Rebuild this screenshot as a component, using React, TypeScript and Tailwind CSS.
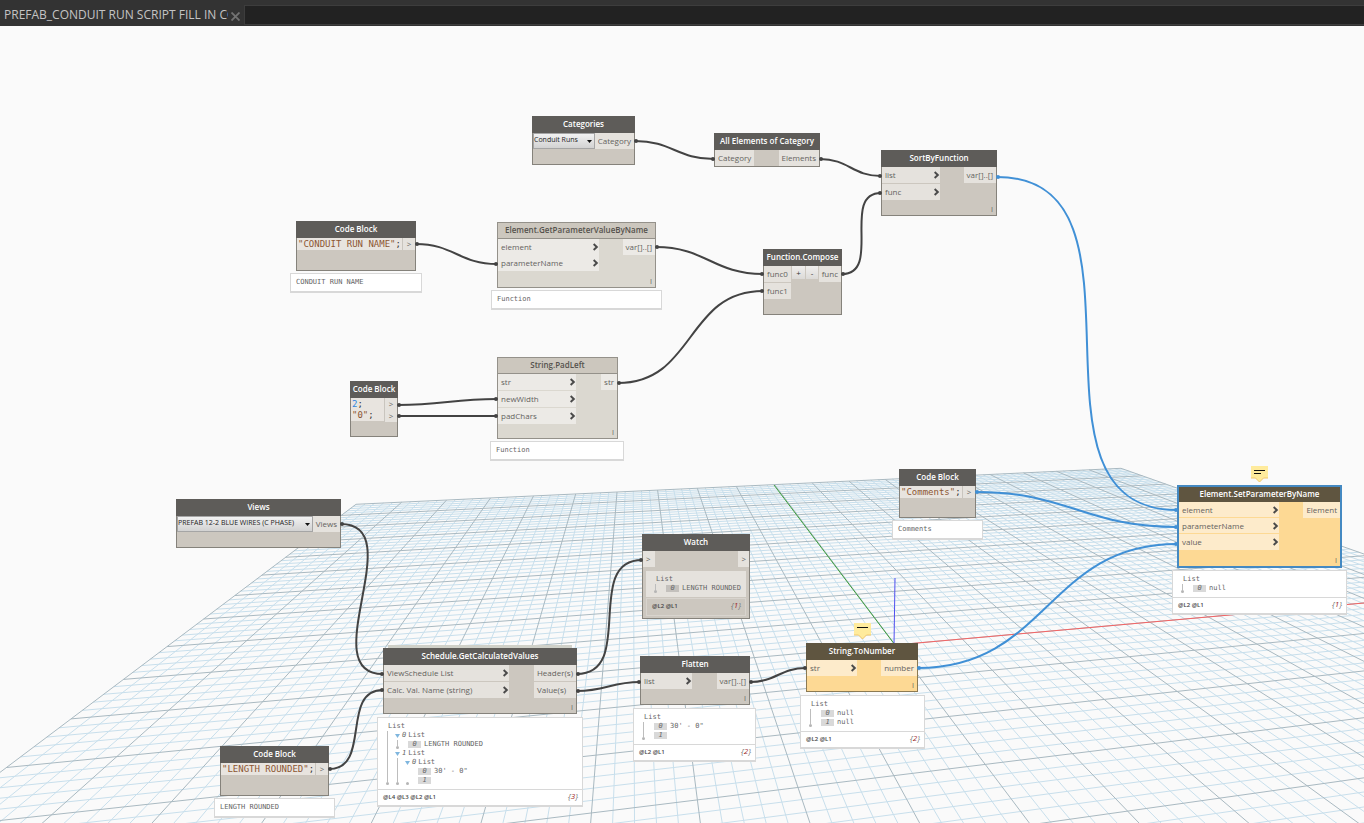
import { useId, type ReactNode } from 'react';

type Tone = 'dark' | 'light' | 'warn';

const TONES: Record<Tone, { frame: string; header: string; port: string }> = {
  dark: { frame: 'border-[#85827b] bg-[#ccc7bf]', header: 'bg-[#5e5c59] border-[#5e5c59] text-white', port: 'bg-[#e5e2dd]' },
  light: { frame: 'border-[#94918a] bg-[#dbd8d0]', header: 'bg-[#ccc7be] border-[#94918a] text-[#55524d]', port: 'bg-[#eceae6]' },
  warn: { frame: 'border-[#8c7a52] bg-[#fdd994]', header: 'bg-[#5f5540] border-[#5f5540] text-white', port: 'bg-[#fdebcb]' },
};

/* ---------- background grid ---------- */

// ground plane -> screen, s in 0..1 across, v in -1..1 towards the horizon
function project(s: number, v: number) {
  const w = 1 + 0.4235 * s + 1.0302 * v;
  const x = (2027.8 * s + 651.75 * v + 71) / w;
  const y = (125.2 * s + 304.9 * v + 718.9) / w - 26;
  return `${x.toFixed(1)} ${y.toFixed(1)}`;
}

const CELLS = 100;
const NEAR = -0.74;

function gridPath(major: boolean) {
  let d = '';
  for (let i = 0; i <= CELLS; i++) {
    if ((i % 5 === 0) !== major) continue;
    const s = i / CELLS;
    const v = -1 + s * 2;
    d += `M${project(s, NEAR)}L${project(s, 1)}`;
    if (v >= NEAR) d += `M${project(0, v)}L${project(1, v)}`;
  }
  return d;
}

const MINOR = gridPath(false);
const MAJOR = gridPath(true);

function Grid() {
  return (
    <svg className="absolute inset-0 h-full w-full" aria-hidden="true">
      <path d={MINOR} stroke="#c8dfec" fill="none" />
      <path d={MAJOR} stroke="#a9b9c1" fill="none" />
      <path d="M774 459L895 619" stroke="#3c9e3c" />
      <path d="M895 619L1364 577" stroke="#f56464" />
      <path d="M895 552L894 619" stroke="#5050f0" />
    </svg>
  );
}

/* ---------- wires ---------- */

const WIRES = [
  [635, 115, 714, 133],
  [820, 133, 881, 150],
  [416, 218, 497, 238],
  [656, 221, 763, 248],
  [618, 357, 763, 265],
  [842, 248, 881, 167],
  [398, 379, 497, 373],
  [398, 390, 497, 390],
  [341, 498, 383, 648],
  [329, 743, 383, 664],
  [577, 648, 642, 534],
  [577, 665, 640, 656],
  [750, 656, 806, 642],
];

const ACTIVE_WIRES = [
  [997, 151, 1177, 484],
  [976, 466, 1177, 501],
  [918, 642, 1177, 518],
];

function Wire({ points, color }: { points: number[]; color: string }) {
  const [x1, y1, x2, y2] = points;
  const bend = 0.45 * Math.hypot(x2 - x1, y2 - y1);
  return (
    <g>
      <path d={`M${x1} ${y1}C${x1 + bend} ${y1} ${x2 - bend} ${y2} ${x2} ${y2}`} fill="none" stroke={color} strokeWidth="2" />
      <circle cx={x1 + 1} cy={y1} r="2" fill={color} />
      <circle cx={x2 - 1} cy={y2} r="2" fill={color} />
    </g>
  );
}

function Wires() {
  return (
    <svg className="pointer-events-none absolute inset-0 h-full w-full" aria-hidden="true">
      {WIRES.map((w, i) => (
        <Wire key={i} points={w} color="#434343" />
      ))}
      {ACTIVE_WIRES.map((w, i) => (
        <Wire key={i} points={w} color="#4090d6" />
      ))}
    </svg>
  );
}

/* ---------- node pieces ---------- */

function Chevron() {
  return (
    <svg viewBox="0 0 6 8" className="h-2 w-[6px]" aria-hidden="true">
      <path d="M0.6 1L3.8 4L0.6 7" fill="none" stroke="#4a4a4a" strokeWidth="2" />
    </svg>
  );
}

function InPort({ tone = 'dark', children, chevron = true }: { tone?: Tone; children: ReactNode; chevron?: boolean }) {
  return (
    <div className={`flex h-4 items-center justify-between pl-[3px] ${TONES[tone].port}`}>
      <span>{children}</span>
      {chevron && <Chevron />}
    </div>
  );
}

function OutPort({ tone = 'dark', children }: { tone?: Tone; children: ReactNode }) {
  return <div className={`flex h-4 items-center px-[3px] ${TONES[tone].port}`}>{children}</div>;
}

function Node({ title, tone = 'dark', lacing = false, selected = false, className, children }: {
  title: string;
  tone?: Tone;
  lacing?: boolean;
  selected?: boolean;
  className: string;
  children: ReactNode;
}) {
  const t = TONES[tone];
  const frame = selected ? 'border-2 border-[#4489c2] bg-[#fdd994]' : `border ${t.frame}`;
  const headerBox = selected ? 'h-[15px] leading-[13px]' : '-mx-px -mt-px h-[17px] border leading-[14px]';
  return (
    <section className={`absolute flex flex-col text-[8px] leading-[10px] text-[#64625e] ${frame} ${className}`}>
      <h2 className={`whitespace-nowrap text-center font-semibold ${headerBox} ${t.header}`}>{title}</h2>
      {children}
      {lacing && <span className="mt-auto pr-[3px] text-right text-[7px] leading-[10px]">I</span>}
    </section>
  );
}

function Ports({ inputs, outputs }: { inputs: ReactNode; outputs: ReactNode }) {
  return (
    <div className="flex items-start justify-between whitespace-nowrap">
      {inputs}
      {outputs}
    </div>
  );
}

function Dropdown({ label, value, className }: { label: string; value: string; className: string }) {
  const id = useId();
  return (
    <div className={`relative ${className}`}>
      <label htmlFor={id} className="sr-only">{label}</label>
      <select
        id={id}
        defaultValue={value}
        className="block h-4 w-full appearance-none border border-[#a5a5a5] bg-gradient-to-b from-[#f2f2f2] to-[#d2d2d2] pb-[3px] text-[7px] leading-[10px] text-[#222]"
      >
        <option>{value}</option>
      </select>
      <svg viewBox="0 0 5 3" className="pointer-events-none absolute bottom-[6px] right-[3px] h-[3px] w-[5px]" aria-hidden="true">
        <path d="M0 0H5L2.5 3Z" fill="#111" />
      </svg>
    </div>
  );
}

function CodeBlock({ className, lines }: { className: string; lines: ReactNode[] }) {
  return (
    <Node title="Code Block" className={className}>
      <div className="flex items-start">
        <code className="flex-1 whitespace-pre bg-[#e8e4df] pl-px pt-px font-['DejaVu_Sans_Mono','Liberation_Mono',monospace] text-[9px] leading-[11px] text-[#333]">
          {lines.map((l, i) => (
            <span key={i} className="block h-[11px]">{l}</span>
          ))}
        </code>
        <div className="flex flex-col border-l border-[#c9c5be]">
          {lines.map((_, i) => (
            <span key={i} className="flex h-3 w-3 items-center justify-center bg-[#e5e2dd]">&gt;</span>
          ))}
        </div>
      </div>
    </Node>
  );
}

function Str({ children }: { children: string }) {
  return <span className="text-[#8c5632]">{children}</span>;
}

/* ---------- preview bubbles ---------- */

type Item = { value?: string; children?: Item[]; dotOnly?: boolean };

function Tree({ items, dotOnly = false }: { items: Item[]; dotOnly?: boolean }) {
  return (
    <div className="flex">
      <div className="flex w-[3px] shrink-0 flex-col items-center">
        <div className={`w-px flex-1 ${dotOnly ? '' : 'bg-[#bdbdbd]'}`} />
        <div className="h-[3px] w-[3px] rounded-full bg-[#b5b5b5]" />
      </div>
      <div className="flex-1">
        {items.map((item, i) =>
          item.children ? (
            <div key={i} className="pl-[6px]">
              <div className="flex h-[9px] items-center gap-[2px]">
                <svg viewBox="0 0 5 4" className="h-1 w-[5px]" aria-hidden="true">
                  <path d="M0 0H5L2.5 4Z" fill="#7fb6de" />
                </svg>
                <i>{i}</i>
                <span>List</span>
              </div>
              <div className="pl-px">
                <Tree items={item.children} dotOnly={item.dotOnly} />
              </div>
            </div>
          ) : (
            <div key={i} className="flex h-[9px] items-center gap-[3px] pl-[9px]">
              <i className="h-[7px] w-[13px] bg-black/15 text-center leading-[7px]">{i}</i>
              <span className="whitespace-pre">{item.value}</span>
            </div>
          ),
        )}
      </div>
    </div>
  );
}

const MONO = "font-['DejaVu_Sans_Mono','Liberation_Mono',monospace] text-[7px] leading-[9px] text-[#666]";

function TreeList({ items }: { items: Item[] }) {
  return (
    <div className={`py-1 pl-2 ${MONO}`}>
      <div className="pl-[2px]">List</div>
      <Tree items={items} />
    </div>
  );
}

function Levels({ levels, count }: { levels: string; count: number }) {
  return (
    <div className="flex items-start justify-between pl-[5px] pr-1">
      <span className="pt-[3px] text-[6px] font-semibold leading-[8px] text-[#444]">{levels}</span>
      <i className="text-[8px] leading-[11px] text-[#777]">
        {'{'}
        <span className="text-[#a02828]">{count}</span>
        {'}'}
      </i>
    </div>
  );
}

function ValuePreview({ className, children }: { className: string; children: string }) {
  return <div className={`absolute h-5 border border-b-2 border-[#d8d8d8] bg-white pl-[5px] pt-1 ${MONO} ${className}`}>{children}</div>;
}

function ListPreview({ className, items, levels, count }: { className: string; items: Item[]; levels: string; count: number }) {
  return (
    <div className={`absolute border border-b-2 border-[#d8d8d8] bg-white ${className}`}>
      <TreeList items={items} />
      <div className="h-4 border-t border-[#d8d8d8]">
        <Levels levels={levels} count={count} />
      </div>
    </div>
  );
}

function Warning({ className, lines }: { className: string; lines: number }) {
  return (
    <svg viewBox="0 0 17 17" className={`absolute h-[17px] w-[17px] ${className}`} role="img" aria-label="Warning">
      <path d="M0 0H17V12H12.5L8.5 16L4.5 12H0Z" fill="#ffeb9c" />
      <path d="M0 12H4.5L8.5 16L12.5 12H17" fill="none" stroke="#f2c668" />
      <path d="M3 4.5H14" stroke="#111" />
      {lines > 1 && <path d="M3 7.5H10" stroke="#111" />}
    </svg>
  );
}

/* ---------- page ---------- */

function TabBar() {
  return (
    <header className="flex h-[26px] shrink-0 bg-[#333]">
      <div className="flex w-[244px] items-center pl-1 pt-1" role="tablist">
        <button role="tab" aria-selected="true" className="w-56 overflow-hidden whitespace-nowrap text-left text-[12px] leading-5 text-[#c4c4c4]">
          PREFAB_CONDUIT RUN SCRIPT FILL IN CO
        </button>
        <button aria-label="Close tab" className="ml-[3px] pt-[2px]">
          <svg viewBox="0 0 9 9" className="h-[9px] w-[9px]">
            <path d="M0.5 0.5L8.5 8.5M8.5 0.5L0.5 8.5" stroke="#737373" strokeWidth="1.8" />
          </svg>
        </button>
      </div>
      <div className="mb-px mt-[5px] flex-1 border border-r-0 border-[#3d3d3d] bg-[#222]" />
    </header>
  );
}

export default function App() {
  return (
    <div className="flex h-screen flex-col overflow-hidden font-['Open_Sans','Noto_Sans',sans-serif]">
      <TabBar />
      <main className="relative min-h-0 flex-1 overflow-hidden bg-[#fafafa]">
        <Grid />

        <Node title="Categories" className="left-[532px] top-[90px] h-[49px] w-[103px]">
          <Ports
            inputs={<Dropdown label="Category" value="Conduit Runs" className="w-[62px]" />}
            outputs={<OutPort>Category</OutPort>}
          />
        </Node>

        <Node title="All Elements of Category" className="left-[714px] top-[107px] h-[34px] w-[106px]">
          <Ports
            inputs={<div className="w-[39px]"><InPort chevron={false}>Category</InPort></div>}
            outputs={<OutPort>Elements</OutPort>}
          />
        </Node>

        <Node title="SortByFunction" lacing className="left-[881px] top-[124px] h-[66px] w-[116px]">
          <Ports
            inputs={
              <div className="flex w-[58px] flex-col gap-px">
                <InPort>list</InPort>
                <InPort>func</InPort>
              </div>
            }
            outputs={<OutPort>var[]..[]</OutPort>}
          />
        </Node>

        <CodeBlock
          className="left-[296px] top-[195px] h-[50px] w-[120px]"
          lines={[<><Str>"CONDUIT RUN NAME"</Str>;</>]}
        />
        <ValuePreview className="left-[290px] top-[247px] w-[132px]">CONDUIT RUN NAME</ValuePreview>

        <Node title="Element.GetParameterValueByName" tone="light" lacing className="left-[497px] top-[196px] h-[66px] w-[159px]">
          <Ports
            inputs={
              <div className="w-[101px]">
                <InPort tone="light">element</InPort>
                <InPort tone="light">parameterName</InPort>
              </div>
            }
            outputs={<OutPort tone="light">var[]..[]</OutPort>}
          />
        </Node>
        <ValuePreview className="left-[491px] top-[264px] w-[171px]">Function</ValuePreview>

        <Node title="Function.Compose" className="left-[763px] top-[223px] h-[66px] w-[79px]">
          <Ports
            inputs={
              <div className="flex items-start gap-px">
                <div className="flex w-[27px] flex-col gap-px">
                  <InPort chevron={false}>func0</InPort>
                  <InPort chevron={false}>func1</InPort>
                </div>
                <button className="h-[13px] w-[13px] bg-gradient-to-b from-[#f0efee] to-[#dcdad7] text-[#333]">+</button>
                <button className="h-[13px] w-3 bg-gradient-to-b from-[#f0efee] to-[#dcdad7] text-[#333]">-</button>
              </div>
            }
            outputs={<OutPort>func</OutPort>}
          />
        </Node>

        <CodeBlock
          className="left-[350px] top-[355px] h-[56px] w-[48px]"
          lines={[<><span className="text-[#2f86e0]">2</span>;</>, <><Str>"0"</Str>;</>]}
        />

        <Node title="String.PadLeft" tone="light" lacing className="left-[497px] top-[331px] h-[82px] w-[121px]">
          <Ports
            inputs={
              <div className="flex w-[78px] flex-col gap-px">
                <InPort tone="light">str</InPort>
                <InPort tone="light">newWidth</InPort>
                <InPort tone="light">padChars</InPort>
              </div>
            }
            outputs={<OutPort tone="light">str</OutPort>}
          />
        </Node>
        <ValuePreview className="left-[490px] top-[415px] w-[134px]">Function</ValuePreview>

        <Node title="Views" className="left-[176px] top-[473px] h-[49px] w-[165px]">
          <Ports
            inputs={<Dropdown label="View" value="PREFAB 12-2 BLUE WIRES (C PHASE)" className="w-[136px]" />}
            outputs={<OutPort>Views</OutPort>}
          />
        </Node>

        <div className="absolute left-[388px] top-[619px] h-[3px] w-[184px] bg-[#cfd0c8]" />
        <Node title="Schedule.GetCalculatedValues" lacing className="left-[383px] top-[622px] h-[66px] w-[194px]">
          <Ports
            inputs={
              <div className="flex w-[125px] flex-col gap-px">
                <InPort>ViewSchedule List</InPort>
                <InPort>Calc. Val. Name (string)</InPort>
              </div>
            }
            outputs={
              <div className="flex flex-col gap-px">
                <OutPort>Header(s)</OutPort>
                <OutPort>Value(s)</OutPort>
              </div>
            }
          />
        </Node>
        <ListPreview
          className="left-[377px] top-[691px] w-[206px]"
          levels="@L4 @L3 @L2 @L1"
          count={3}
          items={[
            { children: [{ value: 'LENGTH ROUNDED' }] },
            { children: [{ dotOnly: true, children: [{ value: '30\' - 0"' }, { value: '' }] }] },
          ]}
        />

        <CodeBlock
          className="left-[220px] top-[720px] h-[50px] w-[109px]"
          lines={[<><Str>"LENGTH ROUNDED"</Str>;</>]}
        />
        <ValuePreview className="left-[214px] top-[772px] w-[121px]">LENGTH ROUNDED</ValuePreview>

        <Node title="Watch" className="left-[642px] top-[508px] h-[85px] w-[108px]">
          <Ports
            inputs={<div className="w-3"><InPort chevron={false}>&gt;</InPort></div>}
            outputs={<OutPort>&gt;</OutPort>}
          />
          <div className="mx-[3px] mt-1 bg-[#e5e2dd]">
            <TreeList items={[{ value: 'LENGTH ROUNDED' }]} />
          </div>
          <div className="mx-[3px] mt-px h-[18px] border border-[#d8d4ce]">
            <Levels levels="@L2 @L1" count={1} />
          </div>
        </Node>

        <Node title="Flatten" lacing className="left-[640px] top-[630px] h-[49px] w-[110px]">
          <Ports
            inputs={<div className="w-[51px]"><InPort>list</InPort></div>}
            outputs={<OutPort>var[]..[]</OutPort>}
          />
        </Node>
        <ListPreview
          className="left-[633px] top-[682px] w-[123px]"
          levels="@L2 @L1"
          count={2}
          items={[{ value: '30\' - 0"' }, { value: '' }]}
        />

        <Warning className="left-[854px] top-[597px]" lines={1} />
        <Node title="String.ToNumber" tone="warn" lacing className="left-[806px] top-[617px] h-[49px] w-[112px]">
          <Ports
            inputs={<div className="w-[50px]"><InPort tone="warn">str</InPort></div>}
            outputs={<OutPort tone="warn">number</OutPort>}
          />
        </Node>
        <ListPreview
          className="left-[800px] top-[669px] w-[125px]"
          levels="@L2 @L1"
          count={2}
          items={[{ value: 'null' }, { value: 'null' }]}
        />

        <CodeBlock
          className="left-[899px] top-[443px] h-[49px] w-[77px]"
          lines={[<><Str>"Comments"</Str>;</>]}
        />
        <ValuePreview className="left-[892px] top-[494px] w-[91px]">Comments</ValuePreview>

        <Warning className="left-[1251px] top-[440px]" lines={2} />
        <Node
          title="Element.SetParameterByName"
          tone="warn"
          lacing
          selected
          className="left-[1177px] top-[459px] h-[83px] w-[165px]"
        >
          <Ports
            inputs={
              <div className="w-[100px] divide-y divide-[#fdd994]">
                <InPort tone="warn">element</InPort>
                <InPort tone="warn">parameterName</InPort>
                <InPort tone="warn">value</InPort>
              </div>
            }
            outputs={<OutPort tone="warn">Element</OutPort>}
          />
        </Node>
        <ListPreview
          className="left-[1172px] top-[544px] w-[175px]"
          levels="@L2 @L1"
          count={1}
          items={[{ value: 'null' }]}
        />

        <Wires />
      </main>
    </div>
  );
}
